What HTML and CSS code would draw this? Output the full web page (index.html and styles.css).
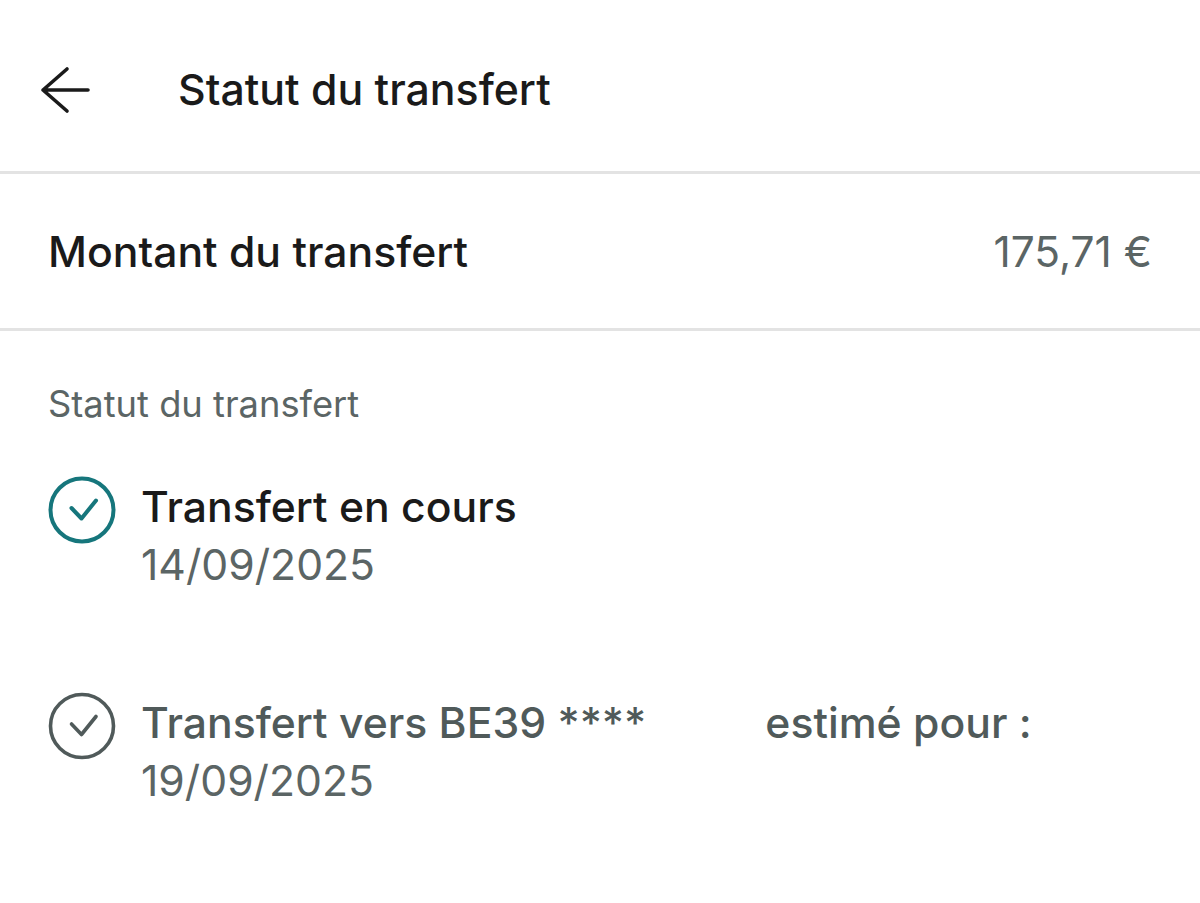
FILE: index.html
```html
<!DOCTYPE html>
<html lang="fr">
<head>
<meta charset="utf-8">
<link rel="stylesheet" href="styles.css">
</head>
<body>
<header class="topbar">
  <svg class="back" viewBox="0 0 50 48" width="50" height="48">
    <path d="M48 24H3M27 3L3 24L27 45" fill="none" stroke="#1a1a1a" stroke-width="3.6" stroke-linecap="round" stroke-linejoin="round"/>
  </svg>
  <h1 class="title">Statut du transfert</h1>
</header>
<section class="amount-row">
  <span class="amount-label">Montant du transfert</span>
  <span class="amount-value">175,71 €</span>
</section>
<section class="status">
  <div class="status-label">Statut du transfert</div>
  <div class="step step-active">
    <svg class="check" viewBox="0 0 68 68" width="68" height="68">
      <circle cx="34" cy="34" r="31.5" fill="none" stroke="#16767c" stroke-width="4"/>
      <path d="M23.5 32L33.5 42.5L48 24.5" fill="none" stroke="#16767c" stroke-width="4" stroke-linecap="round" stroke-linejoin="round"/>
    </svg>
    <div class="step-text">
      <div class="step-title">Transfert en cours</div>
      <div class="step-date">14/09/2025</div>
    </div>
  </div>
  <div class="step step-pending">
    <svg class="check" viewBox="0 0 68 68" width="68" height="68">
      <circle cx="34" cy="34" r="31.5" fill="none" stroke="#505a5a" stroke-width="3.6"/>
      <path d="M23.5 32L33.5 42.5L48 24.5" fill="none" stroke="#505a5a" stroke-width="3.6" stroke-linecap="round" stroke-linejoin="round"/>
    </svg>
    <div class="step-text">
      <div class="step-title"><span>Transfert vers BE39 ****</span><span class="est">estimé pour :</span></div>
      <div class="step-date">19/09/2025</div>
    </div>
  </div>
</section>
</body>
</html>
```
FILE: styles.css
```css
html, body {
  margin: 0;
  padding: 0;
  background: #ffffff;
}
body {
  font-family: Inter, "Noto Sans", "Liberation Sans", sans-serif;
  color: #1a1a1a;
  width: 1200px;
  height: 903px;
  overflow: hidden;
}
.topbar {
  display: flex;
  align-items: center;
  height: 174px;
  padding: 8px 0 0 40px;
  border-bottom: 3px solid #e3e3e3;
  box-sizing: border-box;
}
.back {
  display: block;
  flex: none;
}
.title {
  margin: 0 0 0 88px;
  font-size: 42.8px;
  font-weight: 500;
}
.amount-row {
  display: flex;
  justify-content: space-between;
  align-items: center;
  height: 157px;
  padding: 0 48px 0 48px;
  border-bottom: 3px solid #e3e3e3;
  box-sizing: border-box;
}
.amount-label {
  font-size: 42.7px;
  font-weight: 500;
  color: #1a1a1a;
}
.amount-value {
  font-size: 42.4px;
  font-weight: 400;
  color: #5b6565;
}
.status {
  padding: 48px 48px 0 48px;
}
.status-label {
  font-size: 36.3px;
  color: #5b6565;
  line-height: 50px;
}
.step {
  display: flex;
  align-items: flex-start;
  gap: 25px;
}
.step-active {
  margin-top: 47px;
}
.step-pending {
  margin-top: 98px;
}
.check {
  display: block;
  flex: none;
}
.step-text {
  padding-top: 2px;
}
.step-title {
  font-size: 42.7px;
  font-weight: 500;
  line-height: 58px;
}
.step-active .step-title {
  color: #1a1a1a;
}
.step-pending .step-title {
  color: #505a5a;
}
.est {
  margin-left: 119px;
}
.step-date {
  font-size: 42.7px;
  color: #5b6565;
  line-height: 58px;
}
```
